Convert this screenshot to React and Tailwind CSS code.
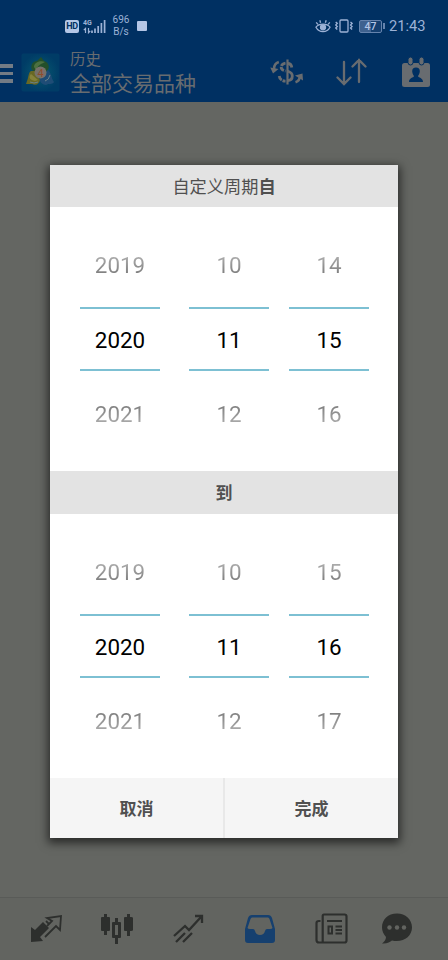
const pickers = [
    {
        years: ["2019", "2020", "2021"],
        months: ["10", "11", "12"],
        days: ["14", "15", "16"],
    },
    {
        years: ["2019", "2020", "2021"],
        months: ["10", "11", "12"],
        days: ["15", "16", "17"],
    },
];

export default function App() {
    return (
        <div className="relative flex flex-col w-[448px] h-[960px] overflow-hidden bg-[#646662] font-['Roboto','Noto_Sans_CJK_SC',sans-serif] select-none">
            <header className="h-[102px] bg-[#003062] shrink-0">
                <StatusBar />
                <TitleBar />
            </header>
            <main className="grow"></main>
            <BottomNav />
            <div className="absolute inset-0 flex justify-center pt-[165px]">
                <PeriodDialog />
            </div>
        </div>
    );
}

function StatusBar() {
    return (
        <div className="flex h-[50px] pt-[2px] pl-[65px] pr-[22px] items-center text-[#9db2d6]">
            <div className="w-[14px] h-[13px] rounded-[2px] bg-[#b4c6e6] text-[#003062] text-[9px] leading-[13px] font-bold text-center tracking-[-0.3px]">
                HD
            </div>
            <div className="ml-1 flex w-[23px] h-[15px] items-end">
                <div className="flex flex-col w-[8px] h-full">
                    <span className="text-[7px] leading-[8px] font-bold">
                        4G
                    </span>
                    <svg width="8" height="7" viewBox="0 0 8 7">
                        <path
                            d="M2.5 6V1.5L.8 3.2M5.5 1v4.7L7.2 4"
                            stroke="currentColor"
                            strokeWidth="1.2"
                            fill="none"
                        />
                    </svg>
                </div>
                <svg width="15" height="15" viewBox="0 0 15 15">
                    <path
                        d="M1 14v-2.5M4 14V9.5M7.2 14V7M10.4 14V4M13.6 14V1"
                        stroke="currentColor"
                        strokeWidth="1.7"
                    />
                </svg>
            </div>
            <div className="ml-1 w-[22px] text-center text-[10px] leading-[12px]">
                <div>696</div>
                <div>B/s</div>
            </div>
            <div className="ml-[5px] w-[10px] h-[10px] rounded-[1px] bg-[#b4c6e6]"></div>

            <svg
                className="ml-auto"
                width="16"
                height="14"
                viewBox="0 0 16 14"
                fill="none"
                stroke="currentColor"
                strokeWidth="1.3"
            >
                <path d="M1 8.2C4 4 12 4 15 8.2C12 14 4 14 1 8.2ZM1.2 3.3l1.7 2M4.8 1.3l.8 2.4M14.8 3.3l-1.7 2M11.2 1.3l-.8 2.4" />
                <circle cx="8" cy="8.3" r="2.5" fill="currentColor" />
            </svg>
            <svg
                className="ml-1"
                width="18"
                height="14"
                viewBox="0 0 18 14"
                fill="none"
                stroke="currentColor"
                strokeWidth="1.3"
            >
                <rect x="5" y="1" width="8" height="12" rx="1" />
                <path d="M.7 3l1.6 1.4L.7 6l1.600 1.5L.7 9l1.6 1.5M15.5 3l1.6 1.4L15.5 6l1.6 1.5L15.5 9l1.6 1.5" />
            </svg>
            <div className="ml-[6px] w-[23px] h-[13px] rounded-[2px] border border-[#6583ad] bg-linear-to-r from-[#3f628f] from-50% to-[#143f70] to-50% text-[10.5px] leading-[11px] font-medium text-center text-[#b4c6e6]">
                47
            </div>
            <div className="ml-px w-[2px] h-[6px] bg-[#6583ad]"></div>
            <div className="ml-[4px] w-[37px] text-[14.7px] leading-5 whitespace-nowrap">
                21:43
            </div>
        </div>
    );
}

function TitleBar() {
    return (
        <div className="flex h-[52px] pr-[17px] text-[#686c70]">
            <div className="flex flex-col w-[13px] gap-[4px] pt-[14px]">
                <div className="h-[3.5px] bg-[#737b85]"></div>
                <div className="h-[3.5px] bg-[#737b85]"></div>
                <div className="h-[3.5px] bg-[#737b85]"></div>
            </div>
            <Logo />
            <div className="ml-[10px] w-[140px] whitespace-nowrap">
                <div className="text-[15.5px] leading-[20px]">历史</div>
                <div className="text-[21px] leading-[28px]">全部交易品种</div>
            </div>
            <svg
                className="ml-[60px] mt-[8px]"
                width="34"
                height="28"
                viewBox="0 0 34 28"
                fill="none"
                stroke="currentColor"
            >
                <path d="M17.500 1.500v25" strokeWidth="2.200" />
                <path
                    d="M21.800 9.500C21.500 6.500 20 5.500 17.500 5.500M17.500 13C21 14.200 22.300 15.500 22.300 18C22.300 21 20.500 22.500 17.500 22.500"
                    strokeWidth="2.800"
                />
                <path
                    d="M15.500 5.200C10 6 9.500 12 15.500 13M9.200 18C9.500 21 12 23.200 15.500 23.200"
                    strokeWidth="2.800"
                    strokeDasharray="5 1"
                />
                <path
                    d="M8.800 4C5.500 5 4 7.500 4 11M25.500 24.200C28.500 23.200 30 21 30 17.500"
                    strokeWidth="2.600"
                />
                <path
                    d="M.3 9.500L8.500 11L3 15.500ZM25 17.500L32.500 15.500L33 22.500Z"
                    fill="currentColor"
                    stroke="none"
                />
            </svg>
            <svg
                className="ml-[32px] mt-[8px]"
                width="31"
                height="29"
                viewBox="0 0 31 29"
                fill="none"
                stroke="currentColor"
                strokeWidth="2.3"
                strokeLinecap="round"
            >
                <path d="M8 4v22M1.500 19.500L8 26l6.500-6.500M23 24V2M16.500 8.500L23 2l6.500 6.500" />
            </svg>
            <svg
                className="ml-auto mt-[6px]"
                width="30"
                height="32"
                viewBox="0 0 30 32"
                fill="currentColor"
            >
                <rect x="1" y="7" width="28" height="24" rx="2.500" />
                <rect
                    x="7"
                    y="1"
                    width="5"
                    height="8"
                    rx="2.500"
                    stroke="#003062"
                />
                <rect
                    x="18"
                    y="1"
                    width="5"
                    height="8"
                    rx="2.500"
                    stroke="#003062"
                />
                <path
                    d="M15 11.500C12.500 11.500 11 13 11.200 15.500C11.400 18 12.300 19 13 20C12.500 22 8 21.500 8 26H22C22 21.500 17.500 22 17 20C17.700 19 18.600 18 18.800 15.500C19 13 17.500 11.500 15 11.500Z"
                    fill="#003062"
                />
            </svg>
        </div>
    );
}

function Logo() {
    return (
        <svg
            className="ml-[8px] mt-[3px] shrink-0"
            width="39"
            height="39"
            viewBox="0 0 39 39"
        >
            <defs>
                <radialGradient id="sea">
                    <stop offset="0" stopColor="#075a70" />
                    <stop offset="1" stopColor="#003c66" />
                </radialGradient>
            </defs>
            <rect x=".5" y=".5" width="38" height="38" rx="2" fill="url(#sea)" />
            <path
                d="M11 17C9 12 12 8 16 8L20 4L23 8C27 9 29 13 27 17L20 22Z"
                fill="#234f2a"
            />
            <path
                d="M13 14C13 10 18 7 24 9C20 11 17 12 15 17"
                fill="#4c7040"
            />
            <path
                d="M10 18C7 20 8 24 6 28L5 31L11 31C15 33 18 31 19 27L15 18Z"
                fill="#686824"
            />
            <path
                d="M27 17C31 21 30 25 33 29C31 32 28 30 25 32C21 32 18 28 19 25Z"
                fill="#1e4c76"
            />
            <path d="M10 21C7 24 9 27 14 28L17 27" fill="#85823b" />
            <path
                d="M24 28Q28 27 29 22M9 29Q13 31 17 29"
                fill="none"
                stroke="#68818b"
            />
            <circle cx="19.500" cy="19.500" r="6" fill="#77716a" />
            <text
                x="19.500"
                y="23.500"
                textAnchor="middle"
                fontSize="11"
                fill="#8f4b2d"
            >
                4
            </text>
        </svg>
    );
}

function PeriodDialog() {
    return (
        <div className="flex flex-col w-[348px] h-[673px] bg-white shadow-[0_3px_9px_2px_rgba(0,0,0,0.6)] text-[#505050]">
            <div className="h-[42px] bg-[#e3e3e3] text-center text-[17.2px] leading-[45px]">
                自定义周期<span className="font-bold">自</span>
            </div>
            <DatePicker {...pickers[0]} />
            <div className="h-[43px] bg-[#e3e3e3] text-center text-[17px] leading-[45px] font-bold">
                到
            </div>
            <DatePicker {...pickers[1]} />
            <div className="flex h-[60px] bg-[#f5f5f5] text-[17px] font-bold">
                <button className="w-[175px] border-r-2 border-[#e8e8e8] pt-[3px]">
                    取消
                </button>
                <button className="grow pt-[3px]">完成</button>
            </div>
        </div>
    );
}

function DatePicker({ years, months, days }) {
    return (
        <div className="flex h-[264px] pt-[16px] pl-[30px]">
            <Wheel values={years} />
            <div className="w-[29px]"></div>
            <Wheel values={months} />
            <div className="w-[20px]"></div>
            <Wheel values={days} />
        </div>
    );
}

function Wheel({ values }) {
    const [prev, current, next] = values;
    return (
        <div className="w-[80px] text-center text-[22.4px]">
            <div className="h-[84px] leading-[85px] text-transparent bg-clip-text bg-linear-to-b from-[#b0b0b0] from-38% to-[#7c7c7c] to-62%">
                {prev}
            </div>
            <div className="h-[64px] border-y-2 border-[#7dc0d3] text-black leading-[62px]">
                {current}
            </div>
            <div className="h-[88px] leading-[87px] text-transparent bg-clip-text bg-linear-to-b from-[#7c7c7c] from-38% to-[#b0b0b0] to-62%">
                {next}
            </div>
        </div>
    );
}

function BottomNav() {
    return (
        <nav className="flex h-[63px] border-t border-[#595b58] bg-[#626460] pl-[29px] pt-[14px] text-[#2d2f2d] shrink-0">
            <svg width="34" height="34" viewBox="0 0 34 34">
                <path
                    d="M2 15L6 18L14 10L20 16L11 25L14 29L2 30Z"
                    fill="currentColor"
                />
                <path
                    d="M17 9L20 12L18 14M20 12L23 9L18 6L32 4L31 18L27 14L16 25"
                    fill="none"
                    stroke="currentColor"
                    strokeWidth="1.800"
                />
            </svg>
            <svg
                className="ml-[37px]"
                width="34"
                height="34"
                viewBox="0 0 34 34"
                fill="currentColor"
            >
                <path d="M4 2h3v3h2q1 0 1 1v12q0 1-1 1H7v4H4v-4H2q-1 0-1-1V6q0-1 1-1h2zM27 2h3v3h1q2 0 2 1v12q0 1-2 1h-1v5h-3v-5h-2q-1 0-1-1V6q0-1 1-1h2z" />
                <path d="M15 6h3v4h2q1 0 1 1v14q0 1-1 1h-2v6h-3v-6h-2q-1 0-1-1V11q0-1 1-1h2zM15 13v10h3V13z" />
            </svg>
            <svg
                className="ml-[37px]"
                width="34"
                height="34"
                viewBox="0 0 34 34"
                fill="none"
                stroke="currentColor"
                strokeWidth="2.300"
            >
                <path d="M3 24L14 14L18 18L30 5M24 4H31V11M5 30L14 21M12 30L21 21" />
            </svg>
            <svg
                className="ml-[39px]"
                width="32"
                height="34"
                viewBox="0 0 32 34"
            >
                <path
                    d="M8 3H24Q27 3 28 6L31 17V28Q31 31 28 31H4Q1 31 1 28V17L4 6Q5 3 8 3ZM8 5.500Q7 5.500 6.500 7L3.500 16Q4 17 6 17H9Q10.500 17 11 19Q12 23 16 23Q20 23 21 19Q21.500 17 23 17H26Q28 17 28.500 16L25.500 7Q25 5.500 24 5.500Z"
                    fill="#16406f"
                    fillRule="evenodd"
                />
            </svg>
            <svg
                className="ml-[39px]"
                width="33"
                height="34"
                viewBox="0 0 33 34"
                fill="none"
                stroke="currentColor"
                strokeWidth="2.200"
            >
                <path d="M9 2.500H29.500Q31.500 2.500 31.500 4.500V28.500Q31.500 30.500 29.500 30.500H4Q1.500 30.500 1.500 28V11Q1.500 9 4 9H5.500M7.700 30V4Q7.700 2.500 9 2.500" />
                <path
                    d="M12 9H27M20.500 14.500H27M20.500 18H27M20.500 21.500H27M13.500 14.500H17V21.500H13.500Z"
                    strokeWidth="2"
                />
            </svg>
            <svg
                className="ml-[32px]"
                width="33"
                height="34"
                viewBox="0 0 33 34"
            >
                <path
                    d="M17 1.500C8 1.500 2 7.500 2 15.500C2 19 3.500 22 6 25C6 28 4 30 2 31.500C7 32 10 30 12 28.500C23 31 32 24.500 32 15.500C32 7.500 25.500 1.500 17 1.500Z"
                    fill="currentColor"
                />
                <g fill="#626460">
                    <circle cx="9.500" cy="15.500" r="2.200" />
                    <circle cx="17" cy="15.500" r="2.200" />
                    <circle cx="24" cy="15.500" r="2.200" />
                </g>
            </svg>
        </nav>
    );
}
